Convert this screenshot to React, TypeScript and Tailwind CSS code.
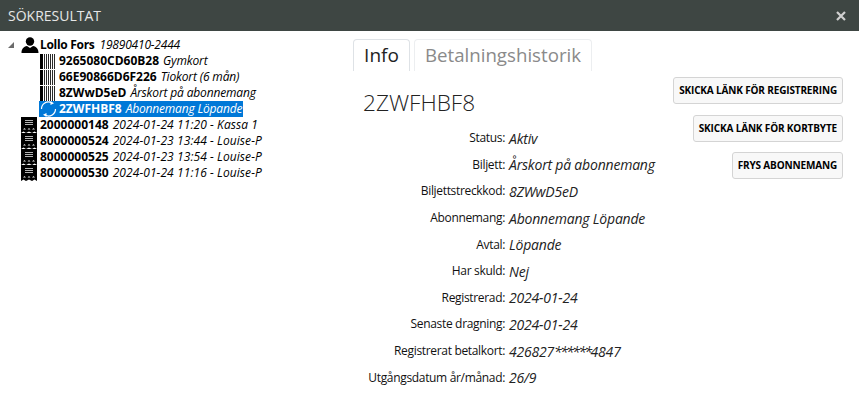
import React from 'react';

const font = "font-['Open_Sans','Noto_Sans',sans-serif]";

function Person() {
  return (
    <svg width="18" height="17" viewBox="0 0 18 17" className="shrink-0">
      <circle cx="9" cy="4.5" r="4.2" fill="#000" />
      <path d="M0.5 16 C0.5 12 2.5 9.5 6 9 L9 11 L12 9 C15.5 9.5 17.5 12 17.5 16 Z" fill="#000" />
    </svg>
  );
}

function Barcode() {
  return (
    <svg width="17" height="15" viewBox="0 0 17 15" className="shrink-0">
      <rect x="0" y="0" width="3" height="15" fill="#000" />
      {[4, 6, 8, 10, 12, 14].map((x) => (
        <rect key={x} x={x} y="0" width="1" height="15" fill="#2a2a2a" />
      ))}
    </svg>
  );
}

function Receipt() {
  return (
    <svg width="16" height="16" viewBox="0 0 16 16" className="shrink-0">
      <path d="M0 0H16V16L13.5 14.5L11 16L8 14.5L5 16L2.5 14.5L0 16Z" fill="#000" />
      <path d="M4 3.5H12M4 5.5H12M4 7.5H12" stroke="#b4b4b4" strokeWidth="1" />
      <path d="M2 12.5L3.5 11L5 12.5ZM6.5 12.5L8 11L9.5 12.5ZM11 12.5L12.5 11L14 12.5Z" fill="#e4e4e4" />
    </svg>
  );
}

function Renew() {
  return (
    <svg width="17" height="16" viewBox="0 0 17 16" className="shrink-0">
      <path d="M1.5 8A7 7 0 0 1 11.5 1.7" fill="none" stroke="#fff" strokeWidth="1.2" />
      <path d="M15.5 8A7 7 0 0 1 5.5 14.3" fill="none" stroke="#fff" strokeWidth="1.2" />
      <path d="M10.5 0L14 2.2L10.5 4Z" fill="#fff" />
      <path d="M6.5 16L3 13.8L6.5 12Z" fill="#fff" />
    </svg>
  );
}

function TreeRow({ indent, icon, code, note, noteClass, selected }: { indent: string; icon: React.ReactNode; code: string; note: string; noteClass: string; selected?: boolean }) {
  return (
    <div className={`flex h-[16px] items-center ${indent}`}>
      <div className={`flex h-[16px] items-center whitespace-nowrap pr-px text-[12px] leading-none ${selected ? 'bg-[#0078d7] text-white' : 'text-black'}`}>
        <span className="flex w-[20px] shrink-0 justify-start pl-px">{icon}</span>
        <b className="font-bold">{code}</b>
        <i className={`ml-[4px] ${noteClass}`}>{note}</i>
      </div>
    </div>
  );
}

const tickets = [
  { code: '9265080CD60B28', note: 'Gymkort' },
  { code: '66E90866D6F226', note: 'Tiokort (6 mån)' },
  { code: '8ZWwD5eD', note: 'Årskort på abonnemang' },
];

const receipts = [
  { code: '2000000148', note: '2024-01-24 11:20 - Kassa 1' },
  { code: '8000000524', note: '2024-01-23 13:44 - Louise-P' },
  { code: '8000000525', note: '2024-01-23 13:54 - Louise-P' },
  { code: '8000000530', note: '2024-01-24 11:16 - Louise-P' },
];

const fields: [string, React.ReactNode][] = [
  ['Status:', 'Aktiv'],
  ['Biljett:', 'Årskort på abonnemang'],
  ['Biljettstreckkod:', '8ZWwD5eD'],
  ['Abonnemang:', 'Abonnemang Löpande'],
  ['Avtal:', 'Löpande'],
  ['Har skuld:', 'Nej'],
  ['Registrerad:', '2024-01-24'],
  ['Senaste dragning:', '2024-01-24'],
  ['Registrerat betalkort:', <>426827<span className="tracking-[-1.6px]">******</span>4847</>],
  ['Utgångsdatum år/månad:', '26/9'],
];

const buttons = ['SKICKA LÄNK FÖR REGISTRERING', 'SKICKA LÄNK FÖR KORTBYTE', 'FRYS ABONNEMANG'];

export default function App() {
  return (
    <div className={`flex h-[413px] w-[859px] flex-col overflow-hidden bg-white ${font}`}>
      <div className="flex h-[31px] shrink-0 items-center justify-between bg-[#3e4643] pl-[8px] pr-[13px]">
        <span className="text-[14px] text-[#e6e6e6]">SÖKRESULTAT</span>
        <svg width="10" height="10" viewBox="0 0 10 10">
          <path d="M1 1L9 9M9 1L1 9" stroke="#d0d0d0" strokeWidth="2.2" />
        </svg>
      </div>

      <div className="flex min-h-0 flex-1">
        <div className="w-[353px] shrink-0 pl-[7px] pt-[6px]">
          <div className="flex h-[16px] items-center">
            <svg width="8" height="8" viewBox="0 0 8 8" className="mr-[6px] shrink-0">
              <path d="M7 1V7H1Z" fill="#6b6b6b" />
            </svg>
            <span className="mr-[1px] w-[18px] shrink-0"><Person /></span>
            <span className="whitespace-nowrap text-[12px] leading-none text-black">
              <b className="font-bold tracking-[-0.3px]">Lollo Fors</b>
              <i className="ml-[5px] tracking-[-0.2px]">19890410-2444</i>
            </span>
          </div>
          {tickets.map((t) => (
            <TreeRow key={t.code} indent="ml-[32px]" icon={<Barcode />} code={t.code} note={t.note} noteClass="tracking-[-0.15px]" />
          ))}
          <TreeRow indent="ml-[32px]" icon={<Renew />} code="2ZWFHBF8" note="Abonnemang Löpande" noteClass="tracking-[-0.18px]" selected />
          {receipts.map((r) => (
            <TreeRow key={r.code} indent="ml-[13px]" icon={<Receipt />} code={r.code} note={r.note} noteClass="tracking-[0.08px]" />
          ))}
        </div>

        <div className="flex min-w-0 flex-1 flex-col">
          <div className="flex h-[40px] shrink-0 items-end gap-[4px] pt-[8px]">
            <div className="flex h-[32px] w-[57px] items-center justify-center rounded-t-[4px] border border-b-0 border-[#dee2e6] text-[19px] text-[#222]">
              Info
            </div>
            <div className="flex h-[32px] w-[178px] items-center justify-center rounded-t-[4px] border border-b-0 border-[#eceef0] text-[18.7px] text-[#8a8a8a]">
              Betalningshistorik
            </div>
          </div>

          <div className="flex flex-1 justify-between pr-[16px]">
            <div>
              <h1 className="ml-[10px] mt-[15px] h-[33px] text-[22.6px] font-light leading-[33px] text-[#222]">2ZWFHBF8</h1>
              <div className="mt-[6px]">
                {fields.map(([label, value]) => (
                  <div key={label} className="flex h-[26.6px] items-center">
                    <span className="w-[152px] shrink-0 whitespace-nowrap text-right text-[12px] tracking-[-0.33px] text-[#111]">{label}</span>
                    <i className="ml-[4px] whitespace-nowrap text-[14px] tracking-[-0.2px] text-[#222]">{value}</i>
                  </div>
                ))}
              </div>
            </div>
            <div className="flex flex-col items-end gap-[10.5px] pt-[6px]">
              {buttons.map((b) => (
                <div key={b} className="flex h-[27px] items-center whitespace-nowrap rounded-[3px] border border-[#d4d4d4] bg-[#f8f8f8] px-[5px] text-[10px] font-bold tracking-[-0.15px] text-black">
                  {b}
                </div>
              ))}
            </div>
          </div>
        </div>
      </div>
    </div>
  );
}
